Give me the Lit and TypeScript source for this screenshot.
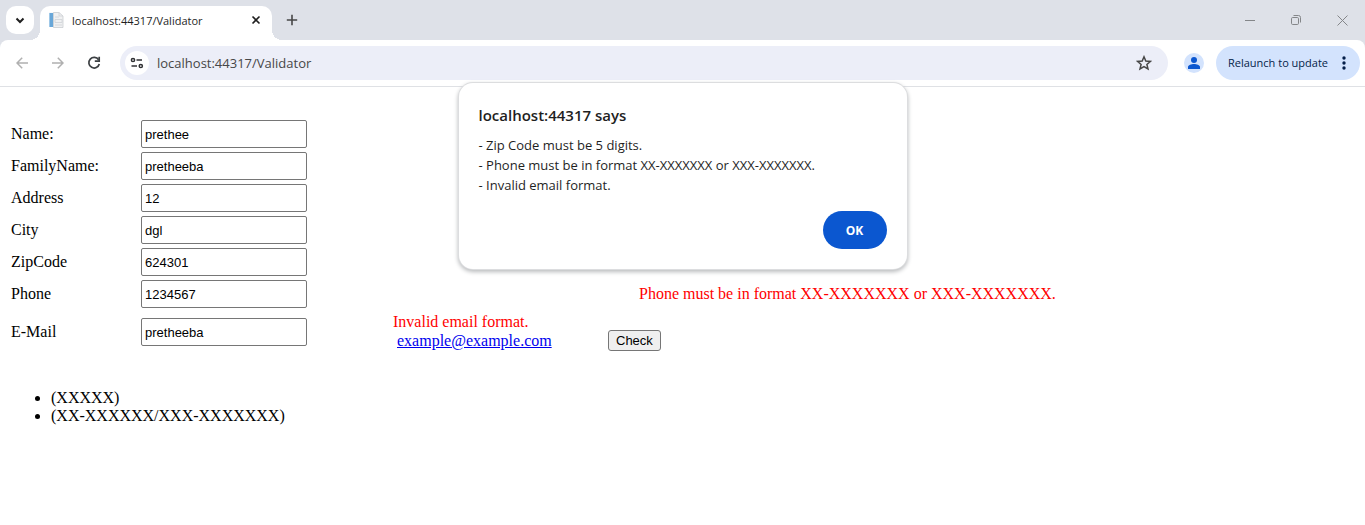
import { LitElement, html, css, nothing } from "lit";
import { customElement } from "lit/decorators.js";

const uiFont = css`"Segoe UI", "Open Sans", sans-serif`;

@customElement("browser-bar")
class BrowserBar extends LitElement {
  static styles = css`
    :host { display: block; font-family: ${uiFont}; background: #dee1e8; }
    button { border: 0; padding: 0; margin: 0; background: none; font: inherit; color: inherit; display: flex; align-items: center; justify-content: center; flex: none; }
    svg { display: block; }
    button svg { fill: none; stroke: currentColor; }
    .tabs { display: flex; align-items: flex-start; height: 40px; }
    .search { width: 28px; height: 28px; margin: 6px 6px 0; border-radius: 10px; background: #fff; color: #1f1f1f; }
    .tab { position: relative; display: flex; align-items: center; width: 232px; height: 34px; margin-top: 6px; padding: 0 8px; box-sizing: border-box; background: #fff; border-radius: 10px 10px 0 0; }
    .tab::before, .tab::after { content: ""; position: absolute; bottom: 0; width: 10px; height: 10px; }
    .tab::before { right: 100%; background: radial-gradient(circle at 0 0, transparent 10px, #fff 10px); }
    .tab::after { left: 100%; background: radial-gradient(circle at 100% 0, transparent 10px, #fff 10px); }
    .title { flex: 1; margin-left: 8px; padding-bottom: 4px; font-size: 11px; line-height: 16px; color: #1f1f1f; white-space: nowrap; }
    .close { width: 16px; height: 16px; margin-bottom: 6px; color: #1f1f1f; }
    .fav { margin-bottom: 6px; }
    .new { width: 28px; height: 28px; margin: 6px 0 0 6px; color: #474747; }
    .window { display: flex; margin-left: auto; color: #848689; }
    .window button { width: 46px; height: 40px; }
    .tools { display: flex; align-items: center; height: 46px; padding: 0 5px 0 4px; background: #fff; border-bottom: 1px solid #dfe1e5; border-radius: 8px 8px 0 0; }
    .nav { width: 36px; height: 34px; color: #b0b0b0; }
    .reload { color: #3c4043; }
    .address { flex: 1; display: flex; align-items: center; height: 34px; margin-left: 8px; padding: 0 14px 0 5px; box-sizing: border-box; border-radius: 17px; background: #eceef8; }
    .site { width: 24px; height: 24px; border-radius: 12px; background: #fff; color: #303134; }
    .url { flex: 1; min-width: 0; margin-left: 8px; padding: 0; border: 0; background: none; outline: 0; font-family: inherit; font-size: 13px; line-height: 20px; color: #474747; }
    .star { width: 20px; height: 20px; color: #474747; }
    .person { width: 20px; height: 20px; margin: 0 12px 0 16px; border-radius: 10px; background: #d3e3fd; color: #0b57d0; }
    .update { min-width: 144px; height: 34px; padding: 0 12px; justify-content: space-between; border-radius: 17px; background: #d3e3fd; color: #041e49; font-size: 11px; line-height: 16px; }
    button .solid { fill: currentColor; stroke: none; }
  `;

  render() {
    return html`
      <div class="tabs">
        <button class="search" aria-label="Search tabs">
          <svg width="12" height="12" viewBox="0 0 12 12" stroke-width="2"><path d="M2.500 4.500 6 8l3.500-3.500" /></svg>
        </button>
        <div class="tab">
          <svg class="fav" width="16" height="16" viewBox="0 0 16 16">
            <path d="M1 .5h9v14H1z" fill="#eef2f6" />
            <path d="M1 1h4v14H1z" fill="#69a7d8" />
            <path d="M1 1h1v14H1z" fill="#9fc8e8" />
            <path d="M5.500.5H11l4 3.500v11.500H5.500z" fill="#f0f1f2" stroke="#c3c7cb" stroke-width=".7" />
            <path d="M11 .5V4h4M7 5h4M7 7.500h7v3H7zM7 13h7" fill="none" stroke="#cfd3d7" stroke-width=".8" />
          </svg>
          <span class="title">localhost:44317/Validator</span>
          <button class="close" aria-label="Close tab">
            <svg width="10" height="10" viewBox="0 0 10 10" stroke-width="1.600"><path d="m1.500 1.500 7 7m0-7-7 7" /></svg>
          </button>
        </div>
        <button class="new" aria-label="New tab">
          <svg width="12" height="12" viewBox="0 0 12 12" stroke-width="1.600"><path d="M6 .8v10.400M.8 6h10.400" /></svg>
        </button>
        <div class="window">
          <button aria-label="Minimize"><svg width="10" height="10" viewBox="0 0 10 10"><path d="M0 5.500h10" /></svg></button>
          <button aria-label="Restore">
            <svg width="10" height="10" viewBox="0 0 10 10"><rect x=".5" y="2.500" width="7" height="7" rx="1.200" /><path d="M2.500.5h5a2 2 0 0 1 2 2v5" /></svg>
          </button>
          <button aria-label="Close"><svg width="11" height="11" viewBox="0 0 11 11"><path d="m.5.5 10 10m0-10-10 10" /></svg></button>
        </div>
      </div>
      <div class="tools">
        <button class="nav" aria-label="Back">
          <svg width="12" height="12" viewBox="0 0 12 12" stroke-width="1.500"><path d="M12 6H1.200M6.200.8 1 6l5.200 5.200" /></svg>
        </button>
        <button class="nav" aria-label="Forward">
          <svg width="12" height="12" viewBox="0 0 12 12" stroke-width="1.500"><path d="M0 6h10.800M5.800.8 11 6l-5.200 5.200" /></svg>
        </button>
        <button class="nav reload" aria-label="Reload">
          <svg width="14" height="14" viewBox="0 0 14 14" stroke-width="1.700"><path d="M11.600 3.800A5.300 5.300 0 1 0 12.300 8" /><path d="M12.200.8v4.400H7.800" /></svg>
        </button>
        <div class="address">
          <button class="site" aria-label="Site information">
            <svg width="14" height="12" viewBox="0 0 14 12" stroke-width="1.500"><circle cx="3" cy="3" r="1.600" /><path d="M6.500 3H12M1.500 9H7" /><circle cx="10.800" cy="9" r="1.600" /></svg>
          </button>
          <input class="url" aria-label="Address" value="localhost:44317/Validator" />
          <button class="star" aria-label="Bookmark this page">
            <svg width="16" height="16" viewBox="0 0 16 16" stroke-width="1.500"><path d="m8 1.800 1.800 4.200 4.600.4-3.500 3 1.100 4.500-4-2.400-4 2.400 1.100-4.500-3.500-3 4.600-.4z" /></svg>
          </button>
        </div>
        <button class="person" aria-label="Profile">
          <svg class="solid" width="12" height="12" viewBox="0 0 12 12"><circle cx="6" cy="3" r="3" /><path d="M0 12v-2c0-2 3.500-3 6-3s6 1 6 3v2z" /></svg>
        </button>
        <button class="update">
          <span>Relaunch to update</span>
          <svg class="solid" width="8" height="16" viewBox="0 0 8 16"><circle cx="4" cy="3" r="1.700" /><circle cx="4" cy="8" r="1.700" /><circle cx="4" cy="13" r="1.700" /></svg>
        </button>
      </div>
    `;
  }
}

@customElement("alert-box")
class AlertBox extends LitElement {
  static styles = css`
    :host { position: absolute; top: 83px; left: 0; right: 0; display: flex; justify-content: center; pointer-events: none; font-family: ${uiFont}; }
    .box { width: 448px; padding: 20px; box-sizing: border-box; border-radius: 14px; background: #fff; box-shadow: 0 0 0 1px #dcdddf, 0 2px 4px 1px #b9bbbd; color: #1f1f1f; pointer-events: auto; }
    h1 { margin: 0 0 8px; font-size: 15px; font-weight: 600; line-height: 24px; }
    p { margin: 0; font-size: 13px; line-height: 20px; }
    .actions { display: flex; justify-content: flex-end; margin-top: 16px; }
    button { width: 64px; height: 38px; border: 0; border-radius: 19px; background: #0b57d0; color: #fff; font-family: inherit; font-size: 12px; font-weight: 700; }
  `;

  render() {
    return html`
      <section class="box" role="alertdialog" aria-labelledby="says" aria-describedby="text">
        <h1 id="says">localhost:44317 says</h1>
        <div id="text">
          <p>- Zip Code must be 5 digits.</p>
          <p>- Phone must be in format XX-XXXXXXX or XXX-XXXXXXX.</p>
          <p>- Invalid email format.</p>
        </div>
        <div class="actions"><button>OK</button></div>
      </section>
    `;
  }
}

interface Field {
  id: string;
  label: string;
  value: string;
}

const fields: Field[] = [
  { id: "name", label: "Name:", value: "prethee" },
  { id: "family", label: "FamilyName:", value: "pretheeba" },
  { id: "address", label: "Address", value: "12" },
  { id: "city", label: "City", value: "dgl" },
  { id: "zip", label: "ZipCode", value: "624301" },
  { id: "phone", label: "Phone", value: "1234567" },
  { id: "email", label: "E-Mail", value: "pretheeba" },
];

@customElement("validator-form")
class ValidatorForm extends LitElement {
  static styles = css`
    :host { display: block; padding: 33px 11px 0; font-family: "Times New Roman", "Liberation Serif", serif; font-size: 16px; line-height: 18px; color: #000; }
    form { display: grid; grid-template-columns: 130px 252px 215px 31px 1fr; row-gap: 4px; align-items: center; }
    label { grid-column: 1; }
    input { grid-column: 2; width: 166px; height: 28px; box-sizing: border-box; padding: 1px 3px; border: 1px solid #767676; border-radius: 2px; background: #fff; color: #000; font-family: Arial, "Liberation Sans", sans-serif; font-size: 13px; }
    .error { color: #f00; }
    .phone { grid-column: 5; }
    .mail { grid-column: 3; padding-bottom: 2px; line-height: 19px; }
    .mail a { margin-left: 4px; color: #00e; }
    .check { grid-column: 4 / 6; justify-self: start; align-self: end; height: 21px; margin-bottom: 1px; padding: 0 7px; border: 1px solid #767676; border-radius: 3px; background: #efefef; color: #000; font-family: Arial, "Liberation Sans", sans-serif; font-size: 13px; line-height: 19px; }
    ul { margin: 37px 0 0; padding-left: 40px; }
  `;

  extra(id: string) {
    if (id === "phone") return html`<span class="error phone">Phone must be in format XX-XXXXXXX or XXX-XXXXXXX.</span>`;
    if (id === "email")
      return html`
        <div class="mail">
          <div class="error">Invalid email format.</div>
          <a href="mailto:example@example.com">example@example.com</a>
        </div>
        <button class="check" type="button">Check</button>
      `;
    return nothing;
  }

  render() {
    return html`
      <form>
        ${fields.map(
          (f) => html`<label for=${f.id}>${f.label}</label><input id=${f.id} type="text" .value=${f.value} />${this.extra(f.id)}`
        )}
      </form>
      <ul>
        <li>(XXXXX)</li>
        <li>(XX-XXXXXX/XXX-XXXXXXX)</li>
      </ul>
    `;
  }
}

@customElement("app-root")
class AppRoot extends LitElement {
  static styles = css`
    :host { display: block; position: relative; min-height: 100vh; background: #fff; }
  `;

  render() {
    return html`<browser-bar></browser-bar><validator-form></validator-form><alert-box></alert-box>`;
  }
}
